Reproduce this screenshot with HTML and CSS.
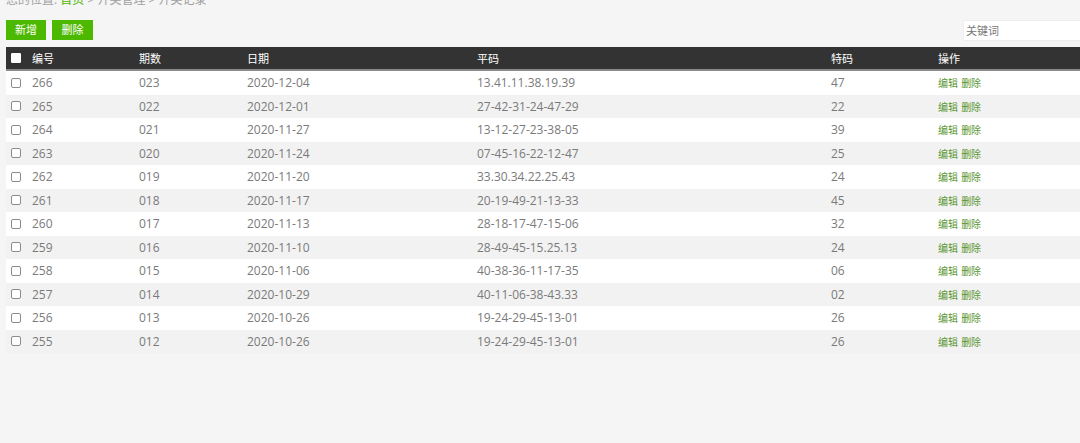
FILE: index.html
```html
<!DOCTYPE html>
<html lang="zh">
<head>
<meta charset="utf-8">
<title>开奖记录</title>
<link rel="stylesheet" href="styles.css">
</head>
<body>
<div class="page">
  <div class="crumb">您的位置: <a class="crumb-link">首页</a> &gt; 开奖管理 &gt; 开奖记录</div>
  <div class="toolbar">
    <div class="btns">
      <button class="btn">新增</button>
      <button class="btn">删除</button>
    </div>
    <input class="search" type="text" placeholder="关键词">
  </div>
  <div class="table">
    <div class="row head">
      <div class="cell chk"><span class="box box-head"></span></div>
      <div class="cell">编号</div>
      <div class="cell">期数</div>
      <div class="cell">日期</div>
      <div class="cell">平码</div>
      <div class="cell">特码</div>
      <div class="cell">操作</div>
    </div>
    <div class="row"><div class="cell chk"><span class="box"></span></div><div class="cell">266</div><div class="cell">023</div><div class="cell">2020-12-04</div><div class="cell">13.41.11.38.19.39</div><div class="cell">47</div><div class="cell ops"><a>编辑</a> <a>删除</a></div></div>
    <div class="row"><div class="cell chk"><span class="box"></span></div><div class="cell">265</div><div class="cell">022</div><div class="cell">2020-12-01</div><div class="cell">27-42-31-24-47-29</div><div class="cell">22</div><div class="cell ops"><a>编辑</a> <a>删除</a></div></div>
    <div class="row"><div class="cell chk"><span class="box"></span></div><div class="cell">264</div><div class="cell">021</div><div class="cell">2020-11-27</div><div class="cell">13-12-27-23-38-05</div><div class="cell">39</div><div class="cell ops"><a>编辑</a> <a>删除</a></div></div>
    <div class="row"><div class="cell chk"><span class="box"></span></div><div class="cell">263</div><div class="cell">020</div><div class="cell">2020-11-24</div><div class="cell">07-45-16-22-12-47</div><div class="cell">25</div><div class="cell ops"><a>编辑</a> <a>删除</a></div></div>
    <div class="row"><div class="cell chk"><span class="box"></span></div><div class="cell">262</div><div class="cell">019</div><div class="cell">2020-11-20</div><div class="cell">33.30.34.22.25.43</div><div class="cell">24</div><div class="cell ops"><a>编辑</a> <a>删除</a></div></div>
    <div class="row"><div class="cell chk"><span class="box"></span></div><div class="cell">261</div><div class="cell">018</div><div class="cell">2020-11-17</div><div class="cell">20-19-49-21-13-33</div><div class="cell">45</div><div class="cell ops"><a>编辑</a> <a>删除</a></div></div>
    <div class="row"><div class="cell chk"><span class="box"></span></div><div class="cell">260</div><div class="cell">017</div><div class="cell">2020-11-13</div><div class="cell">28-18-17-47-15-06</div><div class="cell">32</div><div class="cell ops"><a>编辑</a> <a>删除</a></div></div>
    <div class="row"><div class="cell chk"><span class="box"></span></div><div class="cell">259</div><div class="cell">016</div><div class="cell">2020-11-10</div><div class="cell">28-49-45-15.25.13</div><div class="cell">24</div><div class="cell ops"><a>编辑</a> <a>删除</a></div></div>
    <div class="row"><div class="cell chk"><span class="box"></span></div><div class="cell">258</div><div class="cell">015</div><div class="cell">2020-11-06</div><div class="cell">40-38-36-11-17-35</div><div class="cell">06</div><div class="cell ops"><a>编辑</a> <a>删除</a></div></div>
    <div class="row"><div class="cell chk"><span class="box"></span></div><div class="cell">257</div><div class="cell">014</div><div class="cell">2020-10-29</div><div class="cell">40-11-06-38-43.33</div><div class="cell">02</div><div class="cell ops"><a>编辑</a> <a>删除</a></div></div>
    <div class="row"><div class="cell chk"><span class="box"></span></div><div class="cell">256</div><div class="cell">013</div><div class="cell">2020-10-26</div><div class="cell">19-24-29-45-13-01</div><div class="cell">26</div><div class="cell ops"><a>编辑</a> <a>删除</a></div></div>
    <div class="row"><div class="cell chk"><span class="box"></span></div><div class="cell">255</div><div class="cell">012</div><div class="cell">2020-10-26</div><div class="cell">19-24-29-45-13-01</div><div class="cell">26</div><div class="cell ops"><a>编辑</a> <a>删除</a></div></div>
  </div>
</div>
</body>
</html>
```

FILE: styles.css
```css
html, body {
  margin: 0;
  padding: 0;
  background: #f5f5f5;
  overflow: hidden;
}
body {
  font-family: "Open Sans", "Noto Sans CJK SC", sans-serif;
  font-size: 12px;
  color: #7a7a7a;
}
.page {
  padding-left: 6px;
}
.crumb {
  height: 14px;
  line-height: 14px;
  margin-top: -7px;
  color: #a0a0a0;
  font-size: 12px;
}
.crumb-link {
  color: #4cb800;
}
.toolbar {
  display: flex;
  justify-content: space-between;
  align-items: center;
  margin-top: 13px;
  height: 20px;
}
.btns {
  display: flex;
  gap: 6px;
}
.btn {
  width: 40px;
  height: 20px;
  border: 0;
  padding: 0;
  background: #4cb800;
  color: #fff;
  font-family: "Open Sans", "Noto Sans CJK SC", sans-serif;
  font-size: 11px;
  line-height: 20px;
}
.btn + .btn {
  width: 41px;
}
.search {
  box-sizing: border-box;
  width: 125px;
  height: 21px;
  margin-right: -8px;
  border: 1px solid #eeeeee;
  background: #fff;
  padding: 0 2px;
  font-family: "Open Sans", "Noto Sans CJK SC", sans-serif;
  font-size: 11px;
  color: #666;
  outline: none;
}
.search::placeholder {
  color: #777;
}
.table {
  margin-top: 7px;
}
.row {
  display: grid;
  grid-template-columns: 20px 107px 108px 230px 354px 107px 1fr;
  height: 23.5px;
  align-items: center;
  background: #fff;
}
.row:nth-child(odd) {
  background: #f2f2f2;
}
.row.head {
  background: #333;
  color: #fff;
  height: 22px;
  border-bottom: 2px solid #8a8a8a;
  font-size: 11px;
}
.cell {
  padding-left: 6px;
  white-space: nowrap;
}
.cell.chk {
  padding-left: 5px;
  display: flex;
  align-items: center;
}
.box {
  display: block;
  box-sizing: border-box;
  width: 10px;
  height: 10px;
  border: 1px solid #8c8c8c;
  border-radius: 2px;
  background: #fff;
}
.box-head {
  border-color: #fff;
  border-radius: 1px;
}
.ops a {
  color: #5a9630;
  font-size: 10px;
}
```
